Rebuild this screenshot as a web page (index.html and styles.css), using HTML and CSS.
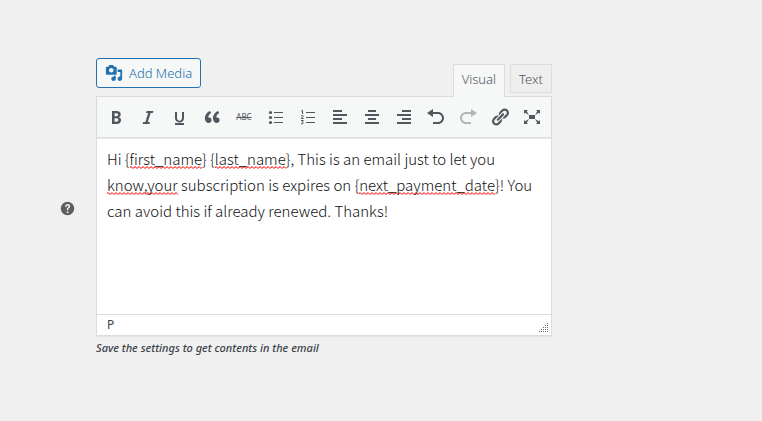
FILE: index.html
```html
<!DOCTYPE html>
<html lang="en">
<head>
<meta charset="utf-8">
<title>Email content</title>
<link rel="stylesheet" href="styles.css">
</head>
<body>
<main class="field">
  <button class="help" type="button" aria-label="Help">
    <svg viewBox="0 0 20 20"><path fill-rule="evenodd" d="M10 1a9 9 0 1 0 0 18 9 9 0 0 0 0-18zM9 14h2.300v2H9zM6.700 7.500C6.800 5.200 8.100 4 10.200 4c2 0 3.300 1.200 3.300 2.900 0 1.400-.7 2.200-1.600 2.900-.7.600-.9.900-.9 1.700v.8H9v-1.100c0-1.200.5-1.900 1.300-2.500.8-.6 1-.9 1-1.600s-.4-1.200-1.200-1.200c-.9 0-1.300.6-1.400 1.600z"/></svg>
  </button>
  <section class="editor">
    <div class="tools">
      <button class="media" type="button">
        <svg class="icon" viewBox="0 0 20 20"><path d="M13 11V4c0-.55-.45-1-1-1h-1.670L9 1H5L3.670 3H2c-.55 0-1 .45-1 1v7c0 .55.45 1 1 1h10c.55 0 1-.45 1-1zM7 4.500c1.380 0 2.500 1.120 2.500 2.500S8.380 9.500 7 9.500 4.500 8.380 4.500 7 5.620 4.500 7 4.500zM14 6h5v10.500c0 1.380-1.120 2.500-2.500 2.500S14 17.880 14 16.500s1.120-2.500 2.500-2.500c.17 0 .34.02.5.05V9h-3V6zm-4 8.050V13h2v3.500c0 1.380-1.120 2.500-2.500 2.500S7 17.880 7 16.500 8.120 14 9.500 14c.17 0 .34.02.5.05z"/></svg>
        Add Media
      </button>
      <div class="tabs">
        <button class="tab active" type="button">Visual</button>
        <button class="tab" type="button">Text</button>
      </div>
    </div>
    <div class="panel">
      <div class="toolbar" role="toolbar" aria-label="Formatting">
        <button type="button" aria-label="Bold"><svg class="icon" viewBox="0 0 20 20"><path d="M6 4v13h4.540c1.370 0 2.460-.33 3.260-1 .8-.66 1.200-1.580 1.200-2.770 0-.84-.17-1.510-.51-2.010s-.9-.85-1.670-1.030v-.09c.57-.1 1.020-.4 1.360-.9s.51-1.130.51-1.910c0-1.140-.39-1.980-1.170-2.500C12.750 4.260 11.500 4 9.780 4H6zm2.570 5.150V6.260h1.360c.73 0 1.270.11 1.610.32.34.22.51.58.51 1.070 0 .54-.16.92-.47 1.150s-.82.35-1.510.35h-1.500zm0 2.190h1.600c1.440 0 2.160.53 2.160 1.610 0 .6-.17 1.050-.51 1.340s-.86.43-1.570.43H8.570v-3.380z"/></svg></button>
        <button type="button" aria-label="Italic"><svg class="icon" viewBox="0 0 20 20"><path d="M14.780 6h-2.130l-2.800 9h2.120l-.62 2H4.600l.62-2h2.140l2.800-9H8.030l.62-2h6.750z"/></svg></button>
        <button type="button" aria-label="Underline"><svg class="icon" viewBox="0 0 20 20"><path d="M14 5h-2v5.710c0 1.990-1.120 2.980-2.450 2.980-1.320 0-2.550-1-2.550-2.960V5H5v5.870c0 1.910 1 4.540 4.480 4.540 3.490 0 4.520-2.580 4.520-4.500V5zm0 13v-2H5v2h9z"/></svg></button>
        <button type="button" aria-label="Blockquote"><svg class="icon" viewBox="0 0 20 20"><path d="M9.490 13.220c0-.74-.2-1.380-.61-1.900-.62-.78-1.830-.88-2.530-.72-.29-1.650 1.110-3.750 2.920-4.650L7.880 4c-2.730 1.300-5.420 4.280-4.960 8.050C3.210 14.430 4.590 16 6.540 16c.85 0 1.560-.25 2.120-.75s.83-1.180.83-2.030zm8.050 0c0-.74-.2-1.380-.61-1.900-.63-.78-1.830-.88-2.530-.72-.29-1.650 1.110-3.750 2.920-4.650L15.930 4c-2.730 1.300-5.410 4.280-4.950 8.050.29 2.380 1.660 3.950 3.610 3.950.85 0 1.560-.25 2.120-.75s.83-1.180.83-2.030z"/></svg></button>
        <button class="strike" type="button" aria-label="Strikethrough">ABC</button>
        <button type="button" aria-label="Bulleted list"><svg class="icon" viewBox="0 0 20 20"><circle cx="4.500" cy="5.500" r="1.600"/><circle cx="4.500" cy="10.500" r="1.600"/><circle cx="4.500" cy="15.500" r="1.600"/><path d="M8 5h9v1H8zM8 10h9v1H8zM8 15h9v1H8z"/></svg></button>
        <button type="button" aria-label="Numbered list"><svg class="icon" viewBox="0 0 20 20"><path d="M8 5h9v1H8zM8 10h9v1H8zM8 15h9v1H8z"/><path class="line" d="M3.300 4l1.200-.7V7M3 9c.8-.9 2.300-.7 2.300.2 0 .8-1.300 1.300-2.200 2.300h2.500M3 13.500h2.300l-1.200 1.400c1.800-.2 1.800 2.300-1.200 1.900"/></svg></button>
        <button type="button" aria-label="Align left"><svg class="icon" viewBox="0 0 20 20"><path d="M3 3h9v2H3zM3 7h14v2H3zM3 11h9v2H3zM3 15h14v2H3z"/></svg></button>
        <button type="button" aria-label="Align center"><svg class="icon" viewBox="0 0 20 20"><path d="M6 3h8v2H6zM3 7h14v2H3zM6 11h8v2H6zM3 15h14v2H3z"/></svg></button>
        <button type="button" aria-label="Align right"><svg class="icon" viewBox="0 0 20 20"><path d="M8 3h9v2H8zM3 7h14v2H3zM8 11h9v2H8zM3 15h14v2H3z"/></svg></button>
        <button type="button" aria-label="Undo"><svg class="icon" viewBox="0 0 20 20"><path d="M12 5H7V2L1 6l6 4V7h5c2.200 0 4 1.800 4 4s-1.800 4-4 4H7v2h5c3.300 0 6-2.700 6-6s-2.700-6-6-6z"/></svg></button>
        <button type="button" aria-label="Redo" disabled><svg class="icon" viewBox="0 0 20 20"><path d="M8 5h5V2l6 4-6 4V7H8c-2.200 0-4 1.800-4 4s1.800 4 4 4h5v2H8c-3.300 0-6-2.700-6-6s2.700-6 6-6z"/></svg></button>
        <button type="button" aria-label="Insert link"><svg class="icon" viewBox="0 0 20 20"><path d="M17.740 2.760c1.680 1.690 1.680 4.410 0 6.100l-1.530 1.520c-1.120 1.120-2.700 1.470-4.140 1.090l2.620-2.610.76-.77.76-.76c.84-.84.84-2.200 0-3.040-.84-.85-2.200-.85-3.040 0l-.77.76-3.380 3.380c-.37-1.440-.02-3.020 1.100-4.140l1.520-1.530c1.690-1.680 4.420-1.680 6.100 0zM8.590 13.430l5.340-5.340c.42-.42.42-1.100 0-1.520-.44-.43-1.130-.39-1.530 0l-5.330 5.340c-.42.42-.42 1.100 0 1.520.44.43 1.130.39 1.520 0zm-.76 2.290l4.140-4.150c.38 1.440.03 3.020-1.090 4.140l-1.520 1.530c-1.690 1.680-4.410 1.680-6.100 0-1.680-1.680-1.680-4.420 0-6.100l1.530-1.520c1.120-1.120 2.700-1.470 4.140-1.100l-4.140 4.150c-.85.84-.85 2.200 0 3.050.84.84 2.200.84 3.040 0z"/></svg></button>
        <button type="button" aria-label="Fullscreen"><svg class="icon" viewBox="0 0 20 20"><path d="M7 8h6v4H7zm-5 5v4h4l-1.200-1.200L7 12l-3.800 2.200M14 17h4v-4l-1.200 1.200L13 12l2.200 3.800M14 3l1.300 1.300L13 8l3.800-2.200L18 7V3M6 3H2v4l1.200-1.200L7 8 4.700 4.300"/></svg></button>
      </div>
      <div class="content" contenteditable="true" role="textbox" aria-multiline="true" aria-label="Email content" spellcheck="false">
        <p>Hi {<span class="typo">first_name</span>} {<span class="typo">last_name</span>}, This is an email just to let you <span class="typo">know,your</span> subscription is expires on {<span class="typo">next_payment_date</span>}! You can avoid this if already renewed. Thanks!</p>
      </div>
      <div class="status">
        <span>P</span>
        <svg class="grip" viewBox="0 0 10 10"><path d="M8 0h1v1H8zM6 2h1v1H6zM8 2h1v1H8zM4 4h1v1H4zM6 4h1v1H6zM8 4h1v1H8zM2 6h1v1H2zM4 6h1v1H4zM6 6h1v1H6zM8 6h1v1H8zM0 8h1v1H0zM2 8h1v1H2zM4 8h1v1H4zM6 8h1v1H6zM8 8h1v1H8z"/></svg>
      </div>
    </div>
    <p class="note">Save the settings to get contents in the email</p>
  </section>
</main>
</body>
</html>
```
FILE: styles.css
```css
* {
  box-sizing: border-box;
}

body {
  margin: 0;
  background: #f0f0f0;
  color: #3c434a;
  font: 13px/20px "Noto Sans", sans-serif;
}

button {
  margin: 0;
  padding: 0;
  border: 0;
  background: none;
  color: inherit;
  font: inherit;
}

.field {
  display: flex;
  align-items: center;
  gap: 21px;
  padding: 58px 60px;
}

.help {
  flex: none;
  width: 15px;
  height: 15px;
}

.help svg {
  display: block;
  fill: #5c5f62;
}

.editor {
  flex: 1;
  max-width: 456px;
}

.tools {
  display: flex;
  justify-content: space-between;
  align-items: flex-start;
}

.icon {
  display: block;
  flex: none;
  width: 20px;
  height: 20px;
  fill: currentColor;
}

.media {
  display: flex;
  align-items: center;
  gap: 6px;
  height: 30px;
  padding: 0 8px;
  border: 1px solid #2271b1;
  border-radius: 3px;
  background: #f6f7f7;
  color: #2271b1;
  font-weight: 300;
}

.media .icon {
  width: 18px;
  height: 18px;
}

.tabs {
  display: flex;
  gap: 5px;
  padding-top: 6px;
}

.tab {
  height: 29px;
  padding: 0 8px;
  border: 1px solid #dcdcde;
  background: #eeeeef;
  color: #50575e;
  font-weight: 300;
}

.tab.active {
  height: 33px;
  padding-bottom: 4px;
  margin-bottom: -1px;
  border-bottom: 0;
  background: #f6f7f7;
}

.panel {
  border: 1px solid #dcdcde;
  background: #fff;
  box-shadow: 0 1px 1px rgba(0, 0, 0, 0.04);
}

.toolbar {
  display: flex;
  flex-wrap: wrap;
  gap: 4px;
  padding: 6px 5px;
  border-bottom: 1px solid #dcdcde;
  background: #f6f7f7;
  box-shadow: 0 1px 1px rgba(0, 0, 0, 0.08);
}

.toolbar button {
  display: flex;
  align-items: center;
  justify-content: center;
  width: 28px;
  height: 28px;
  color: #50575e;
}

.toolbar button:disabled {
  opacity: 0.4;
}

.toolbar .strike {
  font-size: 8px;
  text-decoration: line-through;
}

.line {
  fill: none;
  stroke: currentColor;
}

.content {
  min-height: 176px;
  padding: 8px 10px;
  color: #111;
  font: 300 15px/26px "Noto Sans CJK SC", sans-serif;
  outline: 0;
}

.content p {
  margin: 0;
}

.typo {
  background: url("data:image/svg+xml,%3Csvg xmlns='http://www.w3.org/2000/svg' width='4' height='3'%3E%3Cpath d='M-1 3L1 .5 3 2.500 5 .5' fill='none' stroke='red'/%3E%3C/svg%3E") 0 100% repeat-x;
}

.status {
  display: flex;
  justify-content: space-between;
  align-items: flex-end;
  padding: 0 2px 0 10px;
  border-top: 1px solid #dcdcde;
  font-size: 12px;
}

.grip {
  width: 10px;
  height: 10px;
  margin-bottom: 2px;
  fill: #646970;
}

.note {
  margin: 2px 0 0;
  font-size: 11px;
  font-style: italic;
  font-weight: 500;
}
```
